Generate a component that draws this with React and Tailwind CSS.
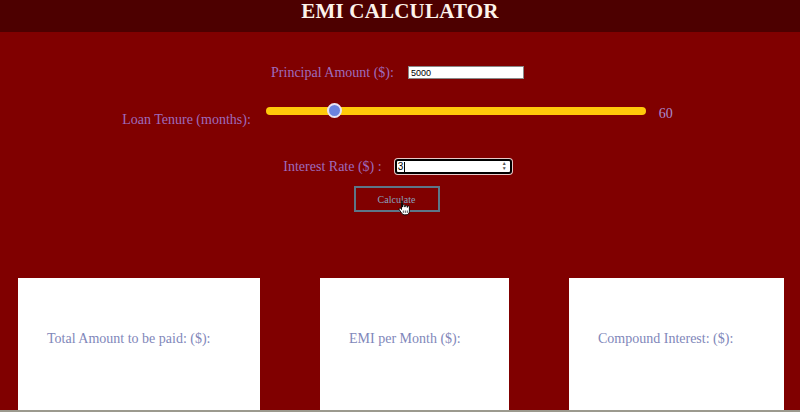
import React from "react";

const serif = { fontFamily: '"Liberation Serif", "DejaVu Serif", serif' };

function HandCursor() {
  return (
    <svg width="13" height="16" viewBox="0 0 13 16" className="absolute left-[42px] top-[12px]">
      <path
        d="M3.5 1.2c.6 0 1 .4 1 1V7h.3V5.6c0-.6.4-1 1-1s1 .4 1 1V7h.3V6.2c0-.6.4-1 1-1s1 .4 1 1V7.3h.3V6.9c0-.6.4-1 1-1s1 .4 1 1v4.3c0 1.9-1.3 3.6-3.3 3.6H6.3c-1 0-1.8-.5-2.4-1.3L1.2 9.6c-.3-.5-.2-1.1.3-1.4.5-.3 1-.1 1.3.3l.7 1V2.2c0-.6.4-1 1-1z"
        fill="#fff"
        stroke="#000"
        strokeWidth="0.9"
      />
      <path d="M5.3 10.5v2.4M7.3 10.5v2.4M9.3 10.5v2.4" stroke="#000" strokeWidth="0.7" />
    </svg>
  );
}

function Card({ width, children }) {
  return (
    <div className={`bg-white h-[132px] shrink-0 flex items-center pl-[29px] pb-[12px] ${width}`}>
      <span className="text-[14px] text-[#7f87ba]">{children}</span>
    </div>
  );
}

export default function App() {
  return (
    <div className="w-[800px] h-[412px] overflow-hidden bg-[#800000] flex flex-col" style={serif}>
      <header className="h-[32px] shrink-0 bg-[#4d0000] flex justify-center">
        <h1 className="text-[21px] leading-[21px] pt-[1px] font-bold text-[#fdf3ea] tracking-[0.2px]">
          EMI CALCULATOR
        </h1>
      </header>

      <div className="flex flex-col items-center pr-[5px] shrink-0">
        <div className="flex items-center gap-[14px] mt-[30px]">
          <span className="text-[14px] text-[#9e6cbd]">Principal Amount ($):</span>
          <input
            readOnly
            value="5000"
            className="w-[116px] h-[13px] bg-white border border-[#888] text-[9px] text-black px-[2px] leading-[11px] outline-none"
            style={{ fontFamily: '"Liberation Sans", sans-serif' }}
          />
        </div>

        <div className="flex items-start mt-[24px]">
          <span className="text-[14px] text-[#9e6cbd] mt-[2px] mr-[15px]">Loan Tenure (months):</span>
          <div className="relative w-[380px] h-[8px] bg-[#ffc90a] rounded-full">
            <div className="absolute left-[61px] top-[-4px] w-[15px] h-[15px] rounded-full bg-[#6b83e0] border-2 border-[#e8e4f4]" />
          </div>
          <span className="text-[14px] text-[#a98cd0] ml-[13px] mt-[-4px]">60</span>
        </div>

        <div className="flex items-center gap-[13px] mt-[26px]">
          <span className="text-[14px] text-[#9e6cbd]">Interest Rate ($) :</span>
          <div className="relative w-[117px] h-[15px] bg-white border-2 border-black rounded-[3px] ring-1 ring-[#e8c8c8] flex items-center">
            <span
              className="text-[10px] leading-[10px] text-black pl-[1px] border-r border-black pr-[1px]"
              style={{ fontFamily: '"Liberation Sans", sans-serif' }}
            >
              3
            </span>
            <span className="absolute right-[3px] top-[0px] flex flex-col items-center text-[#555] text-[5px] leading-[5px]">
              <span>▲</span>
              <span>▼</span>
            </span>
          </div>
        </div>

        <button className="relative mt-[9px] ml-[-2px] w-[86px] h-[26px] border-2 border-[#5c7688] text-[10px] text-[#8aa0bf]">
          Calculate
          <HandCursor />
        </button>
      </div>

      <div className="flex gap-[60px] pl-[18px] mt-[66px] shrink-0">
        <Card width="w-[242px]">Total Amount to be paid: ($):</Card>
        <Card width="w-[189px]">EMI per Month ($):</Card>
        <Card width="w-[215px]">Compound Interest: ($):</Card>
      </div>
      <div className="h-[2px] shrink-0 bg-[#9c9a8e]" />
    </div>
  );
}
